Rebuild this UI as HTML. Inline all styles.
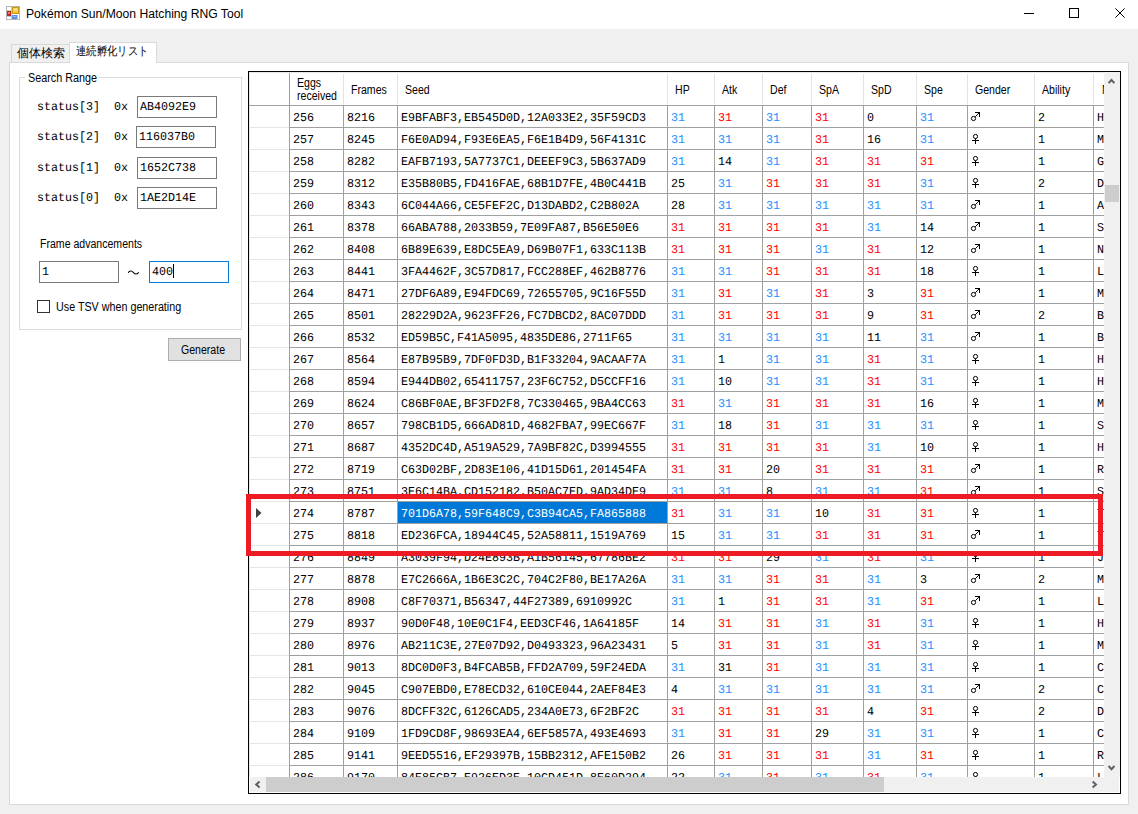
<!DOCTYPE html>
<html><head><meta charset="utf-8"><style>
*{margin:0;padding:0;box-sizing:border-box}
html,body{width:1138px;height:814px;overflow:hidden;background:#F0F0F0;position:relative;font-family:"Liberation Sans",sans-serif;color:#000}
.a{position:absolute}
.ui{position:absolute;font-family:"Liberation Sans",sans-serif;font-size:12px;white-space:nowrap;transform-origin:0 0;transform:scaleX(.88);line-height:20px}
.cjk{position:absolute;font-family:"Liberation Sans",sans-serif;font-size:12px;white-space:nowrap;line-height:20px}
.mono{position:absolute;font-family:"Liberation Mono",monospace;font-size:12px;white-space:pre;line-height:20px;transform-origin:0 0;transform:scaleX(.9722);text-rendering:geometricPrecision}
#grid{position:absolute;left:248px;top:71px;width:873px;height:723px;border:1px solid #000;background:#fff}
#clip{position:absolute;left:0;top:0;width:855px;height:705px;overflow:hidden;background:#fff}
.vl{position:absolute;width:1px;background:#A0A0A0}
.vlh{position:absolute;width:1px;background:#E3E3E3}
.hl{position:absolute;height:1px;background:#A0A0A0}
.hll{position:absolute;height:1px;background:#E6E6E6}
.ht{position:absolute;font-family:"Liberation Sans",sans-serif;font-size:12px;white-space:nowrap;transform-origin:0 0;transform:scaleX(.88);line-height:20px;color:#000}
.ct{position:absolute;font-family:"Liberation Mono",monospace;font-size:12px;white-space:pre;line-height:20px;height:20px;transform-origin:0 0;transform:scaleX(.9722);text-rendering:geometricPrecision}
.sel{position:absolute;background:#0078D7}
.tri{position:absolute}
.tb{position:absolute;border:1px solid #7A7A7A;background:#fff}
</style></head><body>
<!-- title bar -->
<div class="a" style="left:0;top:0;width:1138px;height:29px;background:#fff"></div>
<svg class="a" style="left:6px;top:6px" width="15" height="15" viewBox="0 0 15 15">
 <rect x="0.5" y="0.5" width="13" height="13" fill="#fff" stroke="#B4B4B4"/>
 <path d="M0.5 4.5 H5.5 M0.5 10.5 H5.5 M5.5 0.5 V13.5 M11.5 8.5 V13.5" stroke="#C8C8C8" stroke-width="1"/>
 <rect x="6.5" y="1.5" width="6" height="6" fill="#F5C63A" stroke="#C79A10" stroke-width="1"/>
 <rect x="7.5" y="2.5" width="4" height="2" fill="#FBE49A"/>
 <rect x="1" y="5" width="4" height="5" fill="#C4241E"/>
 <rect x="2" y="6" width="2" height="2" fill="#E07A70"/>
 <rect x="6" y="9" width="5" height="4" fill="#5B8FE8"/>
 <rect x="7" y="10" width="3" height="1" fill="#9EC0F5"/>
</svg>
<div class="a" style="left:25.5px;top:4px;font-size:12px;line-height:20px;white-space:nowrap;transform-origin:0 0;transform:scaleX(1.012)">Pokémon Sun/Moon Hatching RNG Tool</div>
<div class="a" style="left:1024px;top:13px;width:10px;height:1px;background:#000"></div>
<div class="a" style="left:1069px;top:8px;width:10px;height:10px;border:1px solid #000"></div>
<svg class="a" style="left:1115px;top:8px" width="11" height="11" viewBox="0 0 11 11"><path d="M0.4 0.4 L9.6 9.6 M9.6 0.4 L0.4 9.6" stroke="#000" stroke-width="1"/></svg>

<!-- tabs -->
<div class="a" style="left:11px;top:44px;width:59px;height:19px;border:1px solid #D9D9D9;border-bottom:none;background:#F0F0F0"></div>
<div class="cjk" style="left:17px;top:43px">個体検索</div>
<div class="a" style="left:9px;top:62px;width:1120px;height:743px;border:1px solid #D9D9D9;background:#fff"></div>
<div class="a" style="left:69px;top:42px;width:88px;height:21px;border:1px solid #D9D9D9;border-bottom:none;background:#fff"></div>
<div class="cjk" style="left:76px;top:41px;transform-origin:0 0;transform:scaleX(.86)">連続孵化リスト</div>

<!-- group box -->
<div class="a" style="left:19px;top:77px;width:223px;height:253px;border:1px solid #DCDCDC"></div>
<div class="a" style="left:25px;top:70px;width:73px;height:14px;background:#fff"></div>
<div class="ui" style="left:28px;top:68px;transform:scaleX(.9)">Search Range</div>

<div class="mono" style="left:37px;top:97px">status[3]  0x</div>
<div class="tb" style="left:137px;top:96px;width:80px;height:22px"></div>
<div class="mono" style="left:140px;top:97px">AB4092E9</div>
<div class="mono" style="left:37px;top:127px">status[2]  0x</div>
<div class="tb" style="left:136px;top:126px;width:80px;height:22px"></div>
<div class="mono" style="left:139px;top:127px">116037B0</div>
<div class="mono" style="left:37px;top:158px">status[1]  0x</div>
<div class="tb" style="left:137px;top:157px;width:80px;height:22px"></div>
<div class="mono" style="left:140px;top:158px">1652C738</div>
<div class="mono" style="left:37px;top:188px">status[0]  0x</div>
<div class="tb" style="left:137px;top:187px;width:80px;height:22px"></div>
<div class="mono" style="left:140px;top:188px">1AE2D14E</div>

<div class="ui" style="left:39.6px;top:234px">Frame advancements</div>
<div class="tb" style="left:39px;top:261px;width:80px;height:22px"></div>
<div class="mono" style="left:42px;top:262px">1</div>
<svg class="a" style="left:127px;top:267px" width="13" height="9" viewBox="127 267 13 9"><path d="M128.2 272.8 C129.5 270.6, 131.5 270.4, 133.5 272.6 C135.3 274.6, 137.2 274.4, 138.8 272.4" stroke="#000" stroke-width="1.1" fill="none"/></svg>
<div class="tb" style="left:149px;top:261px;width:80px;height:22px;border-color:#0078D7"></div>
<div class="mono" style="left:152px;top:262px">400</div>
<div class="a" style="left:173px;top:264px;width:1px;height:14px;background:#000"></div>

<div class="a" style="left:37px;top:300px;width:13px;height:13px;border:1px solid #333;background:#fff"></div>
<div class="ui" style="left:56px;top:297px;transform:scaleX(.895)">Use TSV when generating</div>

<div class="a" style="left:168px;top:338px;width:73px;height:23px;border:1px solid #ADADAD;background:#E1E1E1"></div>
<div class="ui" style="left:181px;top:340px">Generate</div>

<!-- grid -->
<div id="grid">
<div id="clip">
<div class="vl" style="left:40px;top:0;height:705px"></div>
<div class="vlh" style="left:94px;top:2px;height:31px"></div>
<div class="vl" style="left:94px;top:33px;height:672px"></div>
<div class="vlh" style="left:148px;top:2px;height:31px"></div>
<div class="vl" style="left:148px;top:33px;height:672px"></div>
<div class="vlh" style="left:418px;top:2px;height:31px"></div>
<div class="vl" style="left:418px;top:33px;height:672px"></div>
<div class="vlh" style="left:465px;top:2px;height:31px"></div>
<div class="vl" style="left:465px;top:33px;height:672px"></div>
<div class="vlh" style="left:513px;top:2px;height:31px"></div>
<div class="vl" style="left:513px;top:33px;height:672px"></div>
<div class="vlh" style="left:562px;top:2px;height:31px"></div>
<div class="vl" style="left:562px;top:33px;height:672px"></div>
<div class="vlh" style="left:614px;top:2px;height:31px"></div>
<div class="vl" style="left:614px;top:33px;height:672px"></div>
<div class="vlh" style="left:667px;top:2px;height:31px"></div>
<div class="vl" style="left:667px;top:33px;height:672px"></div>
<div class="vlh" style="left:718px;top:2px;height:31px"></div>
<div class="vl" style="left:718px;top:33px;height:672px"></div>
<div class="vlh" style="left:785px;top:2px;height:31px"></div>
<div class="vl" style="left:785px;top:33px;height:672px"></div>
<div class="vlh" style="left:844px;top:2px;height:31px"></div>
<div class="vl" style="left:844px;top:33px;height:672px"></div>
<div class="a" style="left:0;top:0;width:855px;height:1px;background:#E8E8E8"></div>
<div class="a" style="left:0;top:0;width:1px;height:705px;background:#E8E8E8"></div>
<div class="hl" style="left:0;top:33px;width:855px"></div>
<div class="ht" style="left:47.5px;top:1px">Eggs</div>
<div class="ht" style="left:47.5px;top:14px">received</div>
<div class="ht" style="left:101.5px;top:8px">Frames</div>
<div class="ht" style="left:155.5px;top:8px">Seed</div>
<div class="ht" style="left:425.5px;top:8px">HP</div>
<div class="ht" style="left:472.5px;top:8px">Atk</div>
<div class="ht" style="left:520.5px;top:8px">Def</div>
<div class="ht" style="left:569.5px;top:8px">SpA</div>
<div class="ht" style="left:621.5px;top:8px">SpD</div>
<div class="ht" style="left:674.5px;top:8px">Spe</div>
<div class="ht" style="left:725.5px;top:8px">Gender</div>
<div class="ht" style="left:792.5px;top:8px">Ability</div>
<div class="ht" style="left:852.8px;top:8px">Nature</div>
<div class="hll" style="left:0;top:55px;width:40px"></div>
<div class="hl" style="left:40px;top:55px;width:815px"></div>
<svg class="a" style="left:718px;top:33px" width="16" height="22" viewBox="0 0 16 22"><circle cx="6.5" cy="13.5" r="2.1" fill="none" stroke="#000" stroke-width="1"/><path d="M8.2 11.8 L12.3 7.7 M8 7.5 H13 M12.5 7 V12" fill="none" stroke="#000" stroke-width="1"/></svg>
<div class="ct" style="left:44px;top:36px;color:#000000">256</div>
<div class="ct" style="left:98px;top:36px;color:#000000">8216</div>
<div class="ct" style="left:152px;top:36px;color:#000000">E9BFABF3,EB545D0D,12A033E2,35F59CD3</div>
<div class="ct" style="left:422px;top:36px;color:#1E90FF">31</div>
<div class="ct" style="left:469px;top:36px;color:#FF0000">31</div>
<div class="ct" style="left:517px;top:36px;color:#1E90FF">31</div>
<div class="ct" style="left:566px;top:36px;color:#FF0000">31</div>
<div class="ct" style="left:618px;top:36px;color:#000000">0</div>
<div class="ct" style="left:671px;top:36px;color:#1E90FF">31</div>
<div class="ct" style="left:789px;top:36px;color:#000000">2</div>
<div class="ct" style="left:848px;top:36px;color:#000000">H</div>
<div class="hll" style="left:0;top:77px;width:40px"></div>
<div class="hl" style="left:40px;top:77px;width:815px"></div>
<svg class="a" style="left:718px;top:55px" width="16" height="22" viewBox="0 0 16 22"><circle cx="8.5" cy="9.5" r="2.1" fill="none" stroke="#000" stroke-width="1"/><path d="M8.5 11.5 V17 M5 13.5 H12" fill="none" stroke="#000" stroke-width="1"/></svg>
<div class="ct" style="left:44px;top:58px;color:#000000">257</div>
<div class="ct" style="left:98px;top:58px;color:#000000">8245</div>
<div class="ct" style="left:152px;top:58px;color:#000000">F6E0AD94,F93E6EA5,F6E1B4D9,56F4131C</div>
<div class="ct" style="left:422px;top:58px;color:#1E90FF">31</div>
<div class="ct" style="left:469px;top:58px;color:#1E90FF">31</div>
<div class="ct" style="left:517px;top:58px;color:#1E90FF">31</div>
<div class="ct" style="left:566px;top:58px;color:#FF0000">31</div>
<div class="ct" style="left:618px;top:58px;color:#000000">16</div>
<div class="ct" style="left:671px;top:58px;color:#1E90FF">31</div>
<div class="ct" style="left:789px;top:58px;color:#000000">1</div>
<div class="ct" style="left:848px;top:58px;color:#000000">M</div>
<div class="hll" style="left:0;top:99px;width:40px"></div>
<div class="hl" style="left:40px;top:99px;width:815px"></div>
<svg class="a" style="left:718px;top:77px" width="16" height="22" viewBox="0 0 16 22"><circle cx="8.5" cy="9.5" r="2.1" fill="none" stroke="#000" stroke-width="1"/><path d="M8.5 11.5 V17 M5 13.5 H12" fill="none" stroke="#000" stroke-width="1"/></svg>
<div class="ct" style="left:44px;top:80px;color:#000000">258</div>
<div class="ct" style="left:98px;top:80px;color:#000000">8282</div>
<div class="ct" style="left:152px;top:80px;color:#000000">EAFB7193,5A7737C1,DEEEF9C3,5B637AD9</div>
<div class="ct" style="left:422px;top:80px;color:#1E90FF">31</div>
<div class="ct" style="left:469px;top:80px;color:#000000">14</div>
<div class="ct" style="left:517px;top:80px;color:#1E90FF">31</div>
<div class="ct" style="left:566px;top:80px;color:#FF0000">31</div>
<div class="ct" style="left:618px;top:80px;color:#FF0000">31</div>
<div class="ct" style="left:671px;top:80px;color:#FF0000">31</div>
<div class="ct" style="left:789px;top:80px;color:#000000">1</div>
<div class="ct" style="left:848px;top:80px;color:#000000">G</div>
<div class="hll" style="left:0;top:121px;width:40px"></div>
<div class="hl" style="left:40px;top:121px;width:815px"></div>
<svg class="a" style="left:718px;top:99px" width="16" height="22" viewBox="0 0 16 22"><circle cx="8.5" cy="9.5" r="2.1" fill="none" stroke="#000" stroke-width="1"/><path d="M8.5 11.5 V17 M5 13.5 H12" fill="none" stroke="#000" stroke-width="1"/></svg>
<div class="ct" style="left:44px;top:102px;color:#000000">259</div>
<div class="ct" style="left:98px;top:102px;color:#000000">8312</div>
<div class="ct" style="left:152px;top:102px;color:#000000">E35B80B5,FD416FAE,68B1D7FE,4B0C441B</div>
<div class="ct" style="left:422px;top:102px;color:#000000">25</div>
<div class="ct" style="left:469px;top:102px;color:#1E90FF">31</div>
<div class="ct" style="left:517px;top:102px;color:#FF0000">31</div>
<div class="ct" style="left:566px;top:102px;color:#FF0000">31</div>
<div class="ct" style="left:618px;top:102px;color:#FF0000">31</div>
<div class="ct" style="left:671px;top:102px;color:#1E90FF">31</div>
<div class="ct" style="left:789px;top:102px;color:#000000">2</div>
<div class="ct" style="left:848px;top:102px;color:#000000">D</div>
<div class="hll" style="left:0;top:143px;width:40px"></div>
<div class="hl" style="left:40px;top:143px;width:815px"></div>
<svg class="a" style="left:718px;top:121px" width="16" height="22" viewBox="0 0 16 22"><circle cx="6.5" cy="13.5" r="2.1" fill="none" stroke="#000" stroke-width="1"/><path d="M8.2 11.8 L12.3 7.7 M8 7.5 H13 M12.5 7 V12" fill="none" stroke="#000" stroke-width="1"/></svg>
<div class="ct" style="left:44px;top:124px;color:#000000">260</div>
<div class="ct" style="left:98px;top:124px;color:#000000">8343</div>
<div class="ct" style="left:152px;top:124px;color:#000000">6C044A66,CE5FEF2C,D13DABD2,C2B802A</div>
<div class="ct" style="left:422px;top:124px;color:#000000">28</div>
<div class="ct" style="left:469px;top:124px;color:#1E90FF">31</div>
<div class="ct" style="left:517px;top:124px;color:#1E90FF">31</div>
<div class="ct" style="left:566px;top:124px;color:#1E90FF">31</div>
<div class="ct" style="left:618px;top:124px;color:#1E90FF">31</div>
<div class="ct" style="left:671px;top:124px;color:#1E90FF">31</div>
<div class="ct" style="left:789px;top:124px;color:#000000">1</div>
<div class="ct" style="left:848px;top:124px;color:#000000">A</div>
<div class="hll" style="left:0;top:165px;width:40px"></div>
<div class="hl" style="left:40px;top:165px;width:815px"></div>
<svg class="a" style="left:718px;top:143px" width="16" height="22" viewBox="0 0 16 22"><circle cx="6.5" cy="13.5" r="2.1" fill="none" stroke="#000" stroke-width="1"/><path d="M8.2 11.8 L12.3 7.7 M8 7.5 H13 M12.5 7 V12" fill="none" stroke="#000" stroke-width="1"/></svg>
<div class="ct" style="left:44px;top:146px;color:#000000">261</div>
<div class="ct" style="left:98px;top:146px;color:#000000">8378</div>
<div class="ct" style="left:152px;top:146px;color:#000000">66ABA788,2033B59,7E09FA87,B56E50E6</div>
<div class="ct" style="left:422px;top:146px;color:#FF0000">31</div>
<div class="ct" style="left:469px;top:146px;color:#FF0000">31</div>
<div class="ct" style="left:517px;top:146px;color:#FF0000">31</div>
<div class="ct" style="left:566px;top:146px;color:#FF0000">31</div>
<div class="ct" style="left:618px;top:146px;color:#1E90FF">31</div>
<div class="ct" style="left:671px;top:146px;color:#000000">14</div>
<div class="ct" style="left:789px;top:146px;color:#000000">1</div>
<div class="ct" style="left:848px;top:146px;color:#000000">S</div>
<div class="hll" style="left:0;top:187px;width:40px"></div>
<div class="hl" style="left:40px;top:187px;width:815px"></div>
<svg class="a" style="left:718px;top:165px" width="16" height="22" viewBox="0 0 16 22"><circle cx="6.5" cy="13.5" r="2.1" fill="none" stroke="#000" stroke-width="1"/><path d="M8.2 11.8 L12.3 7.7 M8 7.5 H13 M12.5 7 V12" fill="none" stroke="#000" stroke-width="1"/></svg>
<div class="ct" style="left:44px;top:168px;color:#000000">262</div>
<div class="ct" style="left:98px;top:168px;color:#000000">8408</div>
<div class="ct" style="left:152px;top:168px;color:#000000">6B89E639,E8DC5EA9,D69B07F1,633C113B</div>
<div class="ct" style="left:422px;top:168px;color:#FF0000">31</div>
<div class="ct" style="left:469px;top:168px;color:#FF0000">31</div>
<div class="ct" style="left:517px;top:168px;color:#FF0000">31</div>
<div class="ct" style="left:566px;top:168px;color:#1E90FF">31</div>
<div class="ct" style="left:618px;top:168px;color:#FF0000">31</div>
<div class="ct" style="left:671px;top:168px;color:#000000">12</div>
<div class="ct" style="left:789px;top:168px;color:#000000">1</div>
<div class="ct" style="left:848px;top:168px;color:#000000">N</div>
<div class="hll" style="left:0;top:209px;width:40px"></div>
<div class="hl" style="left:40px;top:209px;width:815px"></div>
<svg class="a" style="left:718px;top:187px" width="16" height="22" viewBox="0 0 16 22"><circle cx="8.5" cy="9.5" r="2.1" fill="none" stroke="#000" stroke-width="1"/><path d="M8.5 11.5 V17 M5 13.5 H12" fill="none" stroke="#000" stroke-width="1"/></svg>
<div class="ct" style="left:44px;top:190px;color:#000000">263</div>
<div class="ct" style="left:98px;top:190px;color:#000000">8441</div>
<div class="ct" style="left:152px;top:190px;color:#000000">3FA4462F,3C57D817,FCC288EF,462B8776</div>
<div class="ct" style="left:422px;top:190px;color:#1E90FF">31</div>
<div class="ct" style="left:469px;top:190px;color:#1E90FF">31</div>
<div class="ct" style="left:517px;top:190px;color:#FF0000">31</div>
<div class="ct" style="left:566px;top:190px;color:#FF0000">31</div>
<div class="ct" style="left:618px;top:190px;color:#FF0000">31</div>
<div class="ct" style="left:671px;top:190px;color:#000000">18</div>
<div class="ct" style="left:789px;top:190px;color:#000000">1</div>
<div class="ct" style="left:848px;top:190px;color:#000000">L</div>
<div class="hll" style="left:0;top:231px;width:40px"></div>
<div class="hl" style="left:40px;top:231px;width:815px"></div>
<svg class="a" style="left:718px;top:209px" width="16" height="22" viewBox="0 0 16 22"><circle cx="6.5" cy="13.5" r="2.1" fill="none" stroke="#000" stroke-width="1"/><path d="M8.2 11.8 L12.3 7.7 M8 7.5 H13 M12.5 7 V12" fill="none" stroke="#000" stroke-width="1"/></svg>
<div class="ct" style="left:44px;top:212px;color:#000000">264</div>
<div class="ct" style="left:98px;top:212px;color:#000000">8471</div>
<div class="ct" style="left:152px;top:212px;color:#000000">27DF6A89,E94FDC69,72655705,9C16F55D</div>
<div class="ct" style="left:422px;top:212px;color:#1E90FF">31</div>
<div class="ct" style="left:469px;top:212px;color:#FF0000">31</div>
<div class="ct" style="left:517px;top:212px;color:#1E90FF">31</div>
<div class="ct" style="left:566px;top:212px;color:#FF0000">31</div>
<div class="ct" style="left:618px;top:212px;color:#000000">3</div>
<div class="ct" style="left:671px;top:212px;color:#FF0000">31</div>
<div class="ct" style="left:789px;top:212px;color:#000000">1</div>
<div class="ct" style="left:848px;top:212px;color:#000000">M</div>
<div class="hll" style="left:0;top:253px;width:40px"></div>
<div class="hl" style="left:40px;top:253px;width:815px"></div>
<svg class="a" style="left:718px;top:231px" width="16" height="22" viewBox="0 0 16 22"><circle cx="6.5" cy="13.5" r="2.1" fill="none" stroke="#000" stroke-width="1"/><path d="M8.2 11.8 L12.3 7.7 M8 7.5 H13 M12.5 7 V12" fill="none" stroke="#000" stroke-width="1"/></svg>
<div class="ct" style="left:44px;top:234px;color:#000000">265</div>
<div class="ct" style="left:98px;top:234px;color:#000000">8501</div>
<div class="ct" style="left:152px;top:234px;color:#000000">28229D2A,9623FF26,FC7DBCD2,8AC07DDD</div>
<div class="ct" style="left:422px;top:234px;color:#1E90FF">31</div>
<div class="ct" style="left:469px;top:234px;color:#FF0000">31</div>
<div class="ct" style="left:517px;top:234px;color:#FF0000">31</div>
<div class="ct" style="left:566px;top:234px;color:#FF0000">31</div>
<div class="ct" style="left:618px;top:234px;color:#000000">9</div>
<div class="ct" style="left:671px;top:234px;color:#FF0000">31</div>
<div class="ct" style="left:789px;top:234px;color:#000000">2</div>
<div class="ct" style="left:848px;top:234px;color:#000000">B</div>
<div class="hll" style="left:0;top:275px;width:40px"></div>
<div class="hl" style="left:40px;top:275px;width:815px"></div>
<svg class="a" style="left:718px;top:253px" width="16" height="22" viewBox="0 0 16 22"><circle cx="6.5" cy="13.5" r="2.1" fill="none" stroke="#000" stroke-width="1"/><path d="M8.2 11.8 L12.3 7.7 M8 7.5 H13 M12.5 7 V12" fill="none" stroke="#000" stroke-width="1"/></svg>
<div class="ct" style="left:44px;top:256px;color:#000000">266</div>
<div class="ct" style="left:98px;top:256px;color:#000000">8532</div>
<div class="ct" style="left:152px;top:256px;color:#000000">ED59B5C,F41A5095,4835DE86,2711F65</div>
<div class="ct" style="left:422px;top:256px;color:#1E90FF">31</div>
<div class="ct" style="left:469px;top:256px;color:#1E90FF">31</div>
<div class="ct" style="left:517px;top:256px;color:#1E90FF">31</div>
<div class="ct" style="left:566px;top:256px;color:#1E90FF">31</div>
<div class="ct" style="left:618px;top:256px;color:#000000">11</div>
<div class="ct" style="left:671px;top:256px;color:#1E90FF">31</div>
<div class="ct" style="left:789px;top:256px;color:#000000">1</div>
<div class="ct" style="left:848px;top:256px;color:#000000">B</div>
<div class="hll" style="left:0;top:297px;width:40px"></div>
<div class="hl" style="left:40px;top:297px;width:815px"></div>
<svg class="a" style="left:718px;top:275px" width="16" height="22" viewBox="0 0 16 22"><circle cx="8.5" cy="9.5" r="2.1" fill="none" stroke="#000" stroke-width="1"/><path d="M8.5 11.5 V17 M5 13.5 H12" fill="none" stroke="#000" stroke-width="1"/></svg>
<div class="ct" style="left:44px;top:278px;color:#000000">267</div>
<div class="ct" style="left:98px;top:278px;color:#000000">8564</div>
<div class="ct" style="left:152px;top:278px;color:#000000">E87B95B9,7DF0FD3D,B1F33204,9ACAAF7A</div>
<div class="ct" style="left:422px;top:278px;color:#1E90FF">31</div>
<div class="ct" style="left:469px;top:278px;color:#000000">1</div>
<div class="ct" style="left:517px;top:278px;color:#1E90FF">31</div>
<div class="ct" style="left:566px;top:278px;color:#1E90FF">31</div>
<div class="ct" style="left:618px;top:278px;color:#FF0000">31</div>
<div class="ct" style="left:671px;top:278px;color:#1E90FF">31</div>
<div class="ct" style="left:789px;top:278px;color:#000000">1</div>
<div class="ct" style="left:848px;top:278px;color:#000000">H</div>
<div class="hll" style="left:0;top:319px;width:40px"></div>
<div class="hl" style="left:40px;top:319px;width:815px"></div>
<svg class="a" style="left:718px;top:297px" width="16" height="22" viewBox="0 0 16 22"><circle cx="8.5" cy="9.5" r="2.1" fill="none" stroke="#000" stroke-width="1"/><path d="M8.5 11.5 V17 M5 13.5 H12" fill="none" stroke="#000" stroke-width="1"/></svg>
<div class="ct" style="left:44px;top:300px;color:#000000">268</div>
<div class="ct" style="left:98px;top:300px;color:#000000">8594</div>
<div class="ct" style="left:152px;top:300px;color:#000000">E944DB02,65411757,23F6C752,D5CCFF16</div>
<div class="ct" style="left:422px;top:300px;color:#1E90FF">31</div>
<div class="ct" style="left:469px;top:300px;color:#000000">10</div>
<div class="ct" style="left:517px;top:300px;color:#1E90FF">31</div>
<div class="ct" style="left:566px;top:300px;color:#1E90FF">31</div>
<div class="ct" style="left:618px;top:300px;color:#FF0000">31</div>
<div class="ct" style="left:671px;top:300px;color:#1E90FF">31</div>
<div class="ct" style="left:789px;top:300px;color:#000000">1</div>
<div class="ct" style="left:848px;top:300px;color:#000000">H</div>
<div class="hll" style="left:0;top:341px;width:40px"></div>
<div class="hl" style="left:40px;top:341px;width:815px"></div>
<svg class="a" style="left:718px;top:319px" width="16" height="22" viewBox="0 0 16 22"><circle cx="8.5" cy="9.5" r="2.1" fill="none" stroke="#000" stroke-width="1"/><path d="M8.5 11.5 V17 M5 13.5 H12" fill="none" stroke="#000" stroke-width="1"/></svg>
<div class="ct" style="left:44px;top:322px;color:#000000">269</div>
<div class="ct" style="left:98px;top:322px;color:#000000">8624</div>
<div class="ct" style="left:152px;top:322px;color:#000000">C86BF0AE,BF3FD2F8,7C330465,9BA4CC63</div>
<div class="ct" style="left:422px;top:322px;color:#FF0000">31</div>
<div class="ct" style="left:469px;top:322px;color:#1E90FF">31</div>
<div class="ct" style="left:517px;top:322px;color:#FF0000">31</div>
<div class="ct" style="left:566px;top:322px;color:#FF0000">31</div>
<div class="ct" style="left:618px;top:322px;color:#FF0000">31</div>
<div class="ct" style="left:671px;top:322px;color:#000000">16</div>
<div class="ct" style="left:789px;top:322px;color:#000000">1</div>
<div class="ct" style="left:848px;top:322px;color:#000000">M</div>
<div class="hll" style="left:0;top:363px;width:40px"></div>
<div class="hl" style="left:40px;top:363px;width:815px"></div>
<svg class="a" style="left:718px;top:341px" width="16" height="22" viewBox="0 0 16 22"><circle cx="8.5" cy="9.5" r="2.1" fill="none" stroke="#000" stroke-width="1"/><path d="M8.5 11.5 V17 M5 13.5 H12" fill="none" stroke="#000" stroke-width="1"/></svg>
<div class="ct" style="left:44px;top:344px;color:#000000">270</div>
<div class="ct" style="left:98px;top:344px;color:#000000">8657</div>
<div class="ct" style="left:152px;top:344px;color:#000000">798CB1D5,666AD81D,4682FBA7,99EC667F</div>
<div class="ct" style="left:422px;top:344px;color:#1E90FF">31</div>
<div class="ct" style="left:469px;top:344px;color:#000000">18</div>
<div class="ct" style="left:517px;top:344px;color:#FF0000">31</div>
<div class="ct" style="left:566px;top:344px;color:#1E90FF">31</div>
<div class="ct" style="left:618px;top:344px;color:#1E90FF">31</div>
<div class="ct" style="left:671px;top:344px;color:#1E90FF">31</div>
<div class="ct" style="left:789px;top:344px;color:#000000">1</div>
<div class="ct" style="left:848px;top:344px;color:#000000">S</div>
<div class="hll" style="left:0;top:385px;width:40px"></div>
<div class="hl" style="left:40px;top:385px;width:815px"></div>
<svg class="a" style="left:718px;top:363px" width="16" height="22" viewBox="0 0 16 22"><circle cx="8.5" cy="9.5" r="2.1" fill="none" stroke="#000" stroke-width="1"/><path d="M8.5 11.5 V17 M5 13.5 H12" fill="none" stroke="#000" stroke-width="1"/></svg>
<div class="ct" style="left:44px;top:366px;color:#000000">271</div>
<div class="ct" style="left:98px;top:366px;color:#000000">8687</div>
<div class="ct" style="left:152px;top:366px;color:#000000">4352DC4D,A519A529,7A9BF82C,D3994555</div>
<div class="ct" style="left:422px;top:366px;color:#FF0000">31</div>
<div class="ct" style="left:469px;top:366px;color:#FF0000">31</div>
<div class="ct" style="left:517px;top:366px;color:#FF0000">31</div>
<div class="ct" style="left:566px;top:366px;color:#FF0000">31</div>
<div class="ct" style="left:618px;top:366px;color:#1E90FF">31</div>
<div class="ct" style="left:671px;top:366px;color:#000000">10</div>
<div class="ct" style="left:789px;top:366px;color:#000000">1</div>
<div class="ct" style="left:848px;top:366px;color:#000000">H</div>
<div class="hll" style="left:0;top:407px;width:40px"></div>
<div class="hl" style="left:40px;top:407px;width:815px"></div>
<svg class="a" style="left:718px;top:385px" width="16" height="22" viewBox="0 0 16 22"><circle cx="6.5" cy="13.5" r="2.1" fill="none" stroke="#000" stroke-width="1"/><path d="M8.2 11.8 L12.3 7.7 M8 7.5 H13 M12.5 7 V12" fill="none" stroke="#000" stroke-width="1"/></svg>
<div class="ct" style="left:44px;top:388px;color:#000000">272</div>
<div class="ct" style="left:98px;top:388px;color:#000000">8719</div>
<div class="ct" style="left:152px;top:388px;color:#000000">C63D02BF,2D83E106,41D15D61,201454FA</div>
<div class="ct" style="left:422px;top:388px;color:#FF0000">31</div>
<div class="ct" style="left:469px;top:388px;color:#FF0000">31</div>
<div class="ct" style="left:517px;top:388px;color:#000000">20</div>
<div class="ct" style="left:566px;top:388px;color:#FF0000">31</div>
<div class="ct" style="left:618px;top:388px;color:#FF0000">31</div>
<div class="ct" style="left:671px;top:388px;color:#FF0000">31</div>
<div class="ct" style="left:789px;top:388px;color:#000000">1</div>
<div class="ct" style="left:848px;top:388px;color:#000000">R</div>
<div class="hll" style="left:0;top:429px;width:40px"></div>
<div class="hl" style="left:40px;top:429px;width:815px"></div>
<svg class="a" style="left:718px;top:407px" width="16" height="22" viewBox="0 0 16 22"><circle cx="6.5" cy="13.5" r="2.1" fill="none" stroke="#000" stroke-width="1"/><path d="M8.2 11.8 L12.3 7.7 M8 7.5 H13 M12.5 7 V12" fill="none" stroke="#000" stroke-width="1"/></svg>
<div class="ct" style="left:44px;top:410px;color:#000000">273</div>
<div class="ct" style="left:98px;top:410px;color:#000000">8751</div>
<div class="ct" style="left:152px;top:410px;color:#000000">3E6C14BA,CD152182,B50AC7ED,9AD34DE9</div>
<div class="ct" style="left:422px;top:410px;color:#1E90FF">31</div>
<div class="ct" style="left:469px;top:410px;color:#1E90FF">31</div>
<div class="ct" style="left:517px;top:410px;color:#000000">8</div>
<div class="ct" style="left:566px;top:410px;color:#1E90FF">31</div>
<div class="ct" style="left:618px;top:410px;color:#1E90FF">31</div>
<div class="ct" style="left:671px;top:410px;color:#FF0000">31</div>
<div class="ct" style="left:789px;top:410px;color:#000000">1</div>
<div class="ct" style="left:848px;top:410px;color:#000000">S</div>
<div class="hll" style="left:0;top:451px;width:40px"></div>
<div class="hl" style="left:40px;top:451px;width:815px"></div>
<div class="sel" style="left:149px;top:430px;width:269px;height:21px"></div>
<svg class="tri" style="left:7px;top:436px" width="6" height="10" viewBox="0 0 6 10"><path d="M0 0 L5.5 5 L0 10 Z" fill="#404040"/></svg>
<svg class="a" style="left:718px;top:429px" width="16" height="22" viewBox="0 0 16 22"><circle cx="8.5" cy="9.5" r="2.1" fill="none" stroke="#000" stroke-width="1"/><path d="M8.5 11.5 V17 M5 13.5 H12" fill="none" stroke="#000" stroke-width="1"/></svg>
<div class="ct" style="left:44px;top:432px;color:#000000">274</div>
<div class="ct" style="left:98px;top:432px;color:#000000">8787</div>
<div class="ct" style="left:152px;top:432px;color:#FFFFFF">701D6A78,59F648C9,C3B94CA5,FA865888</div>
<div class="ct" style="left:422px;top:432px;color:#FF0000">31</div>
<div class="ct" style="left:469px;top:432px;color:#1E90FF">31</div>
<div class="ct" style="left:517px;top:432px;color:#1E90FF">31</div>
<div class="ct" style="left:566px;top:432px;color:#000000">10</div>
<div class="ct" style="left:618px;top:432px;color:#FF0000">31</div>
<div class="ct" style="left:671px;top:432px;color:#FF0000">31</div>
<div class="ct" style="left:789px;top:432px;color:#000000">1</div>
<div class="ct" style="left:848px;top:432px;color:#000000">T</div>
<div class="hll" style="left:0;top:473px;width:40px"></div>
<div class="hl" style="left:40px;top:473px;width:815px"></div>
<svg class="a" style="left:718px;top:451px" width="16" height="22" viewBox="0 0 16 22"><circle cx="6.5" cy="13.5" r="2.1" fill="none" stroke="#000" stroke-width="1"/><path d="M8.2 11.8 L12.3 7.7 M8 7.5 H13 M12.5 7 V12" fill="none" stroke="#000" stroke-width="1"/></svg>
<div class="ct" style="left:44px;top:454px;color:#000000">275</div>
<div class="ct" style="left:98px;top:454px;color:#000000">8818</div>
<div class="ct" style="left:152px;top:454px;color:#000000">ED236FCA,18944C45,52A58811,1519A769</div>
<div class="ct" style="left:422px;top:454px;color:#000000">15</div>
<div class="ct" style="left:469px;top:454px;color:#1E90FF">31</div>
<div class="ct" style="left:517px;top:454px;color:#1E90FF">31</div>
<div class="ct" style="left:566px;top:454px;color:#FF0000">31</div>
<div class="ct" style="left:618px;top:454px;color:#FF0000">31</div>
<div class="ct" style="left:671px;top:454px;color:#FF0000">31</div>
<div class="ct" style="left:789px;top:454px;color:#000000">1</div>
<div class="ct" style="left:848px;top:454px;color:#000000">T</div>
<div class="hll" style="left:0;top:495px;width:40px"></div>
<div class="hl" style="left:40px;top:495px;width:815px"></div>
<svg class="a" style="left:718px;top:473px" width="16" height="22" viewBox="0 0 16 22"><circle cx="8.5" cy="9.5" r="2.1" fill="none" stroke="#000" stroke-width="1"/><path d="M8.5 11.5 V17 M5 13.5 H12" fill="none" stroke="#000" stroke-width="1"/></svg>
<div class="ct" style="left:44px;top:476px;color:#000000">276</div>
<div class="ct" style="left:98px;top:476px;color:#000000">8849</div>
<div class="ct" style="left:152px;top:476px;color:#000000">A3039F94,D24E893B,A1B56145,67786BE2</div>
<div class="ct" style="left:422px;top:476px;color:#FF0000">31</div>
<div class="ct" style="left:469px;top:476px;color:#FF0000">31</div>
<div class="ct" style="left:517px;top:476px;color:#000000">29</div>
<div class="ct" style="left:566px;top:476px;color:#1E90FF">31</div>
<div class="ct" style="left:618px;top:476px;color:#FF0000">31</div>
<div class="ct" style="left:671px;top:476px;color:#1E90FF">31</div>
<div class="ct" style="left:789px;top:476px;color:#000000">1</div>
<div class="ct" style="left:848px;top:476px;color:#000000">J</div>
<div class="hll" style="left:0;top:517px;width:40px"></div>
<div class="hl" style="left:40px;top:517px;width:815px"></div>
<svg class="a" style="left:718px;top:495px" width="16" height="22" viewBox="0 0 16 22"><circle cx="6.5" cy="13.5" r="2.1" fill="none" stroke="#000" stroke-width="1"/><path d="M8.2 11.8 L12.3 7.7 M8 7.5 H13 M12.5 7 V12" fill="none" stroke="#000" stroke-width="1"/></svg>
<div class="ct" style="left:44px;top:498px;color:#000000">277</div>
<div class="ct" style="left:98px;top:498px;color:#000000">8878</div>
<div class="ct" style="left:152px;top:498px;color:#000000">E7C2666A,1B6E3C2C,704C2F80,BE17A26A</div>
<div class="ct" style="left:422px;top:498px;color:#1E90FF">31</div>
<div class="ct" style="left:469px;top:498px;color:#1E90FF">31</div>
<div class="ct" style="left:517px;top:498px;color:#FF0000">31</div>
<div class="ct" style="left:566px;top:498px;color:#FF0000">31</div>
<div class="ct" style="left:618px;top:498px;color:#1E90FF">31</div>
<div class="ct" style="left:671px;top:498px;color:#000000">3</div>
<div class="ct" style="left:789px;top:498px;color:#000000">2</div>
<div class="ct" style="left:848px;top:498px;color:#000000">M</div>
<div class="hll" style="left:0;top:539px;width:40px"></div>
<div class="hl" style="left:40px;top:539px;width:815px"></div>
<svg class="a" style="left:718px;top:517px" width="16" height="22" viewBox="0 0 16 22"><circle cx="6.5" cy="13.5" r="2.1" fill="none" stroke="#000" stroke-width="1"/><path d="M8.2 11.8 L12.3 7.7 M8 7.5 H13 M12.5 7 V12" fill="none" stroke="#000" stroke-width="1"/></svg>
<div class="ct" style="left:44px;top:520px;color:#000000">278</div>
<div class="ct" style="left:98px;top:520px;color:#000000">8908</div>
<div class="ct" style="left:152px;top:520px;color:#000000">C8F70371,B56347,44F27389,6910992C</div>
<div class="ct" style="left:422px;top:520px;color:#1E90FF">31</div>
<div class="ct" style="left:469px;top:520px;color:#000000">1</div>
<div class="ct" style="left:517px;top:520px;color:#FF0000">31</div>
<div class="ct" style="left:566px;top:520px;color:#FF0000">31</div>
<div class="ct" style="left:618px;top:520px;color:#1E90FF">31</div>
<div class="ct" style="left:671px;top:520px;color:#FF0000">31</div>
<div class="ct" style="left:789px;top:520px;color:#000000">1</div>
<div class="ct" style="left:848px;top:520px;color:#000000">L</div>
<div class="hll" style="left:0;top:561px;width:40px"></div>
<div class="hl" style="left:40px;top:561px;width:815px"></div>
<svg class="a" style="left:718px;top:539px" width="16" height="22" viewBox="0 0 16 22"><circle cx="8.5" cy="9.5" r="2.1" fill="none" stroke="#000" stroke-width="1"/><path d="M8.5 11.5 V17 M5 13.5 H12" fill="none" stroke="#000" stroke-width="1"/></svg>
<div class="ct" style="left:44px;top:542px;color:#000000">279</div>
<div class="ct" style="left:98px;top:542px;color:#000000">8937</div>
<div class="ct" style="left:152px;top:542px;color:#000000">90D0F48,10E0C1F4,EED3CF46,1A64185F</div>
<div class="ct" style="left:422px;top:542px;color:#000000">14</div>
<div class="ct" style="left:469px;top:542px;color:#FF0000">31</div>
<div class="ct" style="left:517px;top:542px;color:#FF0000">31</div>
<div class="ct" style="left:566px;top:542px;color:#1E90FF">31</div>
<div class="ct" style="left:618px;top:542px;color:#FF0000">31</div>
<div class="ct" style="left:671px;top:542px;color:#1E90FF">31</div>
<div class="ct" style="left:789px;top:542px;color:#000000">1</div>
<div class="ct" style="left:848px;top:542px;color:#000000">H</div>
<div class="hll" style="left:0;top:583px;width:40px"></div>
<div class="hl" style="left:40px;top:583px;width:815px"></div>
<svg class="a" style="left:718px;top:561px" width="16" height="22" viewBox="0 0 16 22"><circle cx="8.5" cy="9.5" r="2.1" fill="none" stroke="#000" stroke-width="1"/><path d="M8.5 11.5 V17 M5 13.5 H12" fill="none" stroke="#000" stroke-width="1"/></svg>
<div class="ct" style="left:44px;top:564px;color:#000000">280</div>
<div class="ct" style="left:98px;top:564px;color:#000000">8976</div>
<div class="ct" style="left:152px;top:564px;color:#000000">AB211C3E,27E07D92,D0493323,96A23431</div>
<div class="ct" style="left:422px;top:564px;color:#000000">5</div>
<div class="ct" style="left:469px;top:564px;color:#FF0000">31</div>
<div class="ct" style="left:517px;top:564px;color:#FF0000">31</div>
<div class="ct" style="left:566px;top:564px;color:#1E90FF">31</div>
<div class="ct" style="left:618px;top:564px;color:#FF0000">31</div>
<div class="ct" style="left:671px;top:564px;color:#1E90FF">31</div>
<div class="ct" style="left:789px;top:564px;color:#000000">1</div>
<div class="ct" style="left:848px;top:564px;color:#000000">M</div>
<div class="hll" style="left:0;top:605px;width:40px"></div>
<div class="hl" style="left:40px;top:605px;width:815px"></div>
<svg class="a" style="left:718px;top:583px" width="16" height="22" viewBox="0 0 16 22"><circle cx="8.5" cy="9.5" r="2.1" fill="none" stroke="#000" stroke-width="1"/><path d="M8.5 11.5 V17 M5 13.5 H12" fill="none" stroke="#000" stroke-width="1"/></svg>
<div class="ct" style="left:44px;top:586px;color:#000000">281</div>
<div class="ct" style="left:98px;top:586px;color:#000000">9013</div>
<div class="ct" style="left:152px;top:586px;color:#000000">8DC0D0F3,B4FCAB5B,FFD2A709,59F24EDA</div>
<div class="ct" style="left:422px;top:586px;color:#1E90FF">31</div>
<div class="ct" style="left:469px;top:586px;color:#000000">31</div>
<div class="ct" style="left:517px;top:586px;color:#FF0000">31</div>
<div class="ct" style="left:566px;top:586px;color:#1E90FF">31</div>
<div class="ct" style="left:618px;top:586px;color:#1E90FF">31</div>
<div class="ct" style="left:671px;top:586px;color:#1E90FF">31</div>
<div class="ct" style="left:789px;top:586px;color:#000000">1</div>
<div class="ct" style="left:848px;top:586px;color:#000000">C</div>
<div class="hll" style="left:0;top:627px;width:40px"></div>
<div class="hl" style="left:40px;top:627px;width:815px"></div>
<svg class="a" style="left:718px;top:605px" width="16" height="22" viewBox="0 0 16 22"><circle cx="6.5" cy="13.5" r="2.1" fill="none" stroke="#000" stroke-width="1"/><path d="M8.2 11.8 L12.3 7.7 M8 7.5 H13 M12.5 7 V12" fill="none" stroke="#000" stroke-width="1"/></svg>
<div class="ct" style="left:44px;top:608px;color:#000000">282</div>
<div class="ct" style="left:98px;top:608px;color:#000000">9045</div>
<div class="ct" style="left:152px;top:608px;color:#000000">C907EBD0,E78ECD32,610CE044,2AEF84E3</div>
<div class="ct" style="left:422px;top:608px;color:#000000">4</div>
<div class="ct" style="left:469px;top:608px;color:#1E90FF">31</div>
<div class="ct" style="left:517px;top:608px;color:#1E90FF">31</div>
<div class="ct" style="left:566px;top:608px;color:#1E90FF">31</div>
<div class="ct" style="left:618px;top:608px;color:#1E90FF">31</div>
<div class="ct" style="left:671px;top:608px;color:#1E90FF">31</div>
<div class="ct" style="left:789px;top:608px;color:#000000">2</div>
<div class="ct" style="left:848px;top:608px;color:#000000">C</div>
<div class="hll" style="left:0;top:649px;width:40px"></div>
<div class="hl" style="left:40px;top:649px;width:815px"></div>
<svg class="a" style="left:718px;top:627px" width="16" height="22" viewBox="0 0 16 22"><circle cx="8.5" cy="9.5" r="2.1" fill="none" stroke="#000" stroke-width="1"/><path d="M8.5 11.5 V17 M5 13.5 H12" fill="none" stroke="#000" stroke-width="1"/></svg>
<div class="ct" style="left:44px;top:630px;color:#000000">283</div>
<div class="ct" style="left:98px;top:630px;color:#000000">9076</div>
<div class="ct" style="left:152px;top:630px;color:#000000">8DCFF32C,6126CAD5,234A0E73,6F2BF2C</div>
<div class="ct" style="left:422px;top:630px;color:#FF0000">31</div>
<div class="ct" style="left:469px;top:630px;color:#FF0000">31</div>
<div class="ct" style="left:517px;top:630px;color:#FF0000">31</div>
<div class="ct" style="left:566px;top:630px;color:#FF0000">31</div>
<div class="ct" style="left:618px;top:630px;color:#000000">4</div>
<div class="ct" style="left:671px;top:630px;color:#FF0000">31</div>
<div class="ct" style="left:789px;top:630px;color:#000000">2</div>
<div class="ct" style="left:848px;top:630px;color:#000000">D</div>
<div class="hll" style="left:0;top:671px;width:40px"></div>
<div class="hl" style="left:40px;top:671px;width:815px"></div>
<svg class="a" style="left:718px;top:649px" width="16" height="22" viewBox="0 0 16 22"><circle cx="8.5" cy="9.5" r="2.1" fill="none" stroke="#000" stroke-width="1"/><path d="M8.5 11.5 V17 M5 13.5 H12" fill="none" stroke="#000" stroke-width="1"/></svg>
<div class="ct" style="left:44px;top:652px;color:#000000">284</div>
<div class="ct" style="left:98px;top:652px;color:#000000">9109</div>
<div class="ct" style="left:152px;top:652px;color:#000000">1FD9CD8F,98693EA4,6EF5857A,493E4693</div>
<div class="ct" style="left:422px;top:652px;color:#1E90FF">31</div>
<div class="ct" style="left:469px;top:652px;color:#FF0000">31</div>
<div class="ct" style="left:517px;top:652px;color:#FF0000">31</div>
<div class="ct" style="left:566px;top:652px;color:#000000">29</div>
<div class="ct" style="left:618px;top:652px;color:#1E90FF">31</div>
<div class="ct" style="left:671px;top:652px;color:#1E90FF">31</div>
<div class="ct" style="left:789px;top:652px;color:#000000">1</div>
<div class="ct" style="left:848px;top:652px;color:#000000">C</div>
<div class="hll" style="left:0;top:693px;width:40px"></div>
<div class="hl" style="left:40px;top:693px;width:815px"></div>
<svg class="a" style="left:718px;top:671px" width="16" height="22" viewBox="0 0 16 22"><circle cx="8.5" cy="9.5" r="2.1" fill="none" stroke="#000" stroke-width="1"/><path d="M8.5 11.5 V17 M5 13.5 H12" fill="none" stroke="#000" stroke-width="1"/></svg>
<div class="ct" style="left:44px;top:674px;color:#000000">285</div>
<div class="ct" style="left:98px;top:674px;color:#000000">9141</div>
<div class="ct" style="left:152px;top:674px;color:#000000">9EED5516,EF29397B,15BB2312,AFE150B2</div>
<div class="ct" style="left:422px;top:674px;color:#000000">26</div>
<div class="ct" style="left:469px;top:674px;color:#FF0000">31</div>
<div class="ct" style="left:517px;top:674px;color:#FF0000">31</div>
<div class="ct" style="left:566px;top:674px;color:#FF0000">31</div>
<div class="ct" style="left:618px;top:674px;color:#1E90FF">31</div>
<div class="ct" style="left:671px;top:674px;color:#FF0000">31</div>
<div class="ct" style="left:789px;top:674px;color:#000000">1</div>
<div class="ct" style="left:848px;top:674px;color:#000000">R</div>
<div class="hll" style="left:0;top:715px;width:40px"></div>
<div class="hl" style="left:40px;top:715px;width:815px"></div>
<svg class="a" style="left:718px;top:693px" width="16" height="22" viewBox="0 0 16 22"><circle cx="8.5" cy="9.5" r="2.1" fill="none" stroke="#000" stroke-width="1"/><path d="M8.5 11.5 V17 M5 13.5 H12" fill="none" stroke="#000" stroke-width="1"/></svg>
<div class="ct" style="left:44px;top:696px;color:#000000">286</div>
<div class="ct" style="left:98px;top:696px;color:#000000">9170</div>
<div class="ct" style="left:152px;top:696px;color:#000000">84E85CB7,E926ED3E,10CD451D,8E60D294</div>
<div class="ct" style="left:422px;top:696px;color:#000000">22</div>
<div class="ct" style="left:469px;top:696px;color:#1E90FF">31</div>
<div class="ct" style="left:517px;top:696px;color:#FF0000">31</div>
<div class="ct" style="left:566px;top:696px;color:#1E90FF">31</div>
<div class="ct" style="left:618px;top:696px;color:#FF0000">31</div>
<div class="ct" style="left:671px;top:696px;color:#1E90FF">31</div>
<div class="ct" style="left:789px;top:696px;color:#000000">1</div>
<div class="ct" style="left:848px;top:696px;color:#000000">L</div>
</div>
<!-- vertical scrollbar -->
<div class="a" style="left:855px;top:0;width:16px;height:705px;background:#F0F0F0"></div>
<div class="a" style="left:856px;top:113px;width:14px;height:17px;background:#CDCDCD"></div>
<!-- horizontal scrollbar -->
<div class="a" style="left:1px;top:705px;width:869px;height:15px;background:#F0F0F0"></div>
<div class="a" style="left:17px;top:705px;width:618px;height:15px;background:#CDCDCD"></div>
<svg class="a" style="left:0;top:0" width="872" height="722" viewBox="249 72 872 722">
<path d="M1108.6 83.2 L1111.5 80 L1114.4 83.2" stroke="#606060" stroke-width="2" fill="none"/>
<path d="M1108.6 766 L1111.5 769.2 L1114.4 766" stroke="#606060" stroke-width="2" fill="none"/>
<path d="M259.6 781.5 L256.2 784.5 L259.6 787.5" stroke="#606060" stroke-width="2" fill="none"/>
<path d="M1092.6 781.5 L1096 784.5 L1092.6 787.5" stroke="#606060" stroke-width="2" fill="none"/>
</svg>
</div>
<!-- red highlight box -->
<div class="a" style="left:246px;top:494px;width:857px;height:62px;border:5px solid #ED1C24"></div>
</body></html>
